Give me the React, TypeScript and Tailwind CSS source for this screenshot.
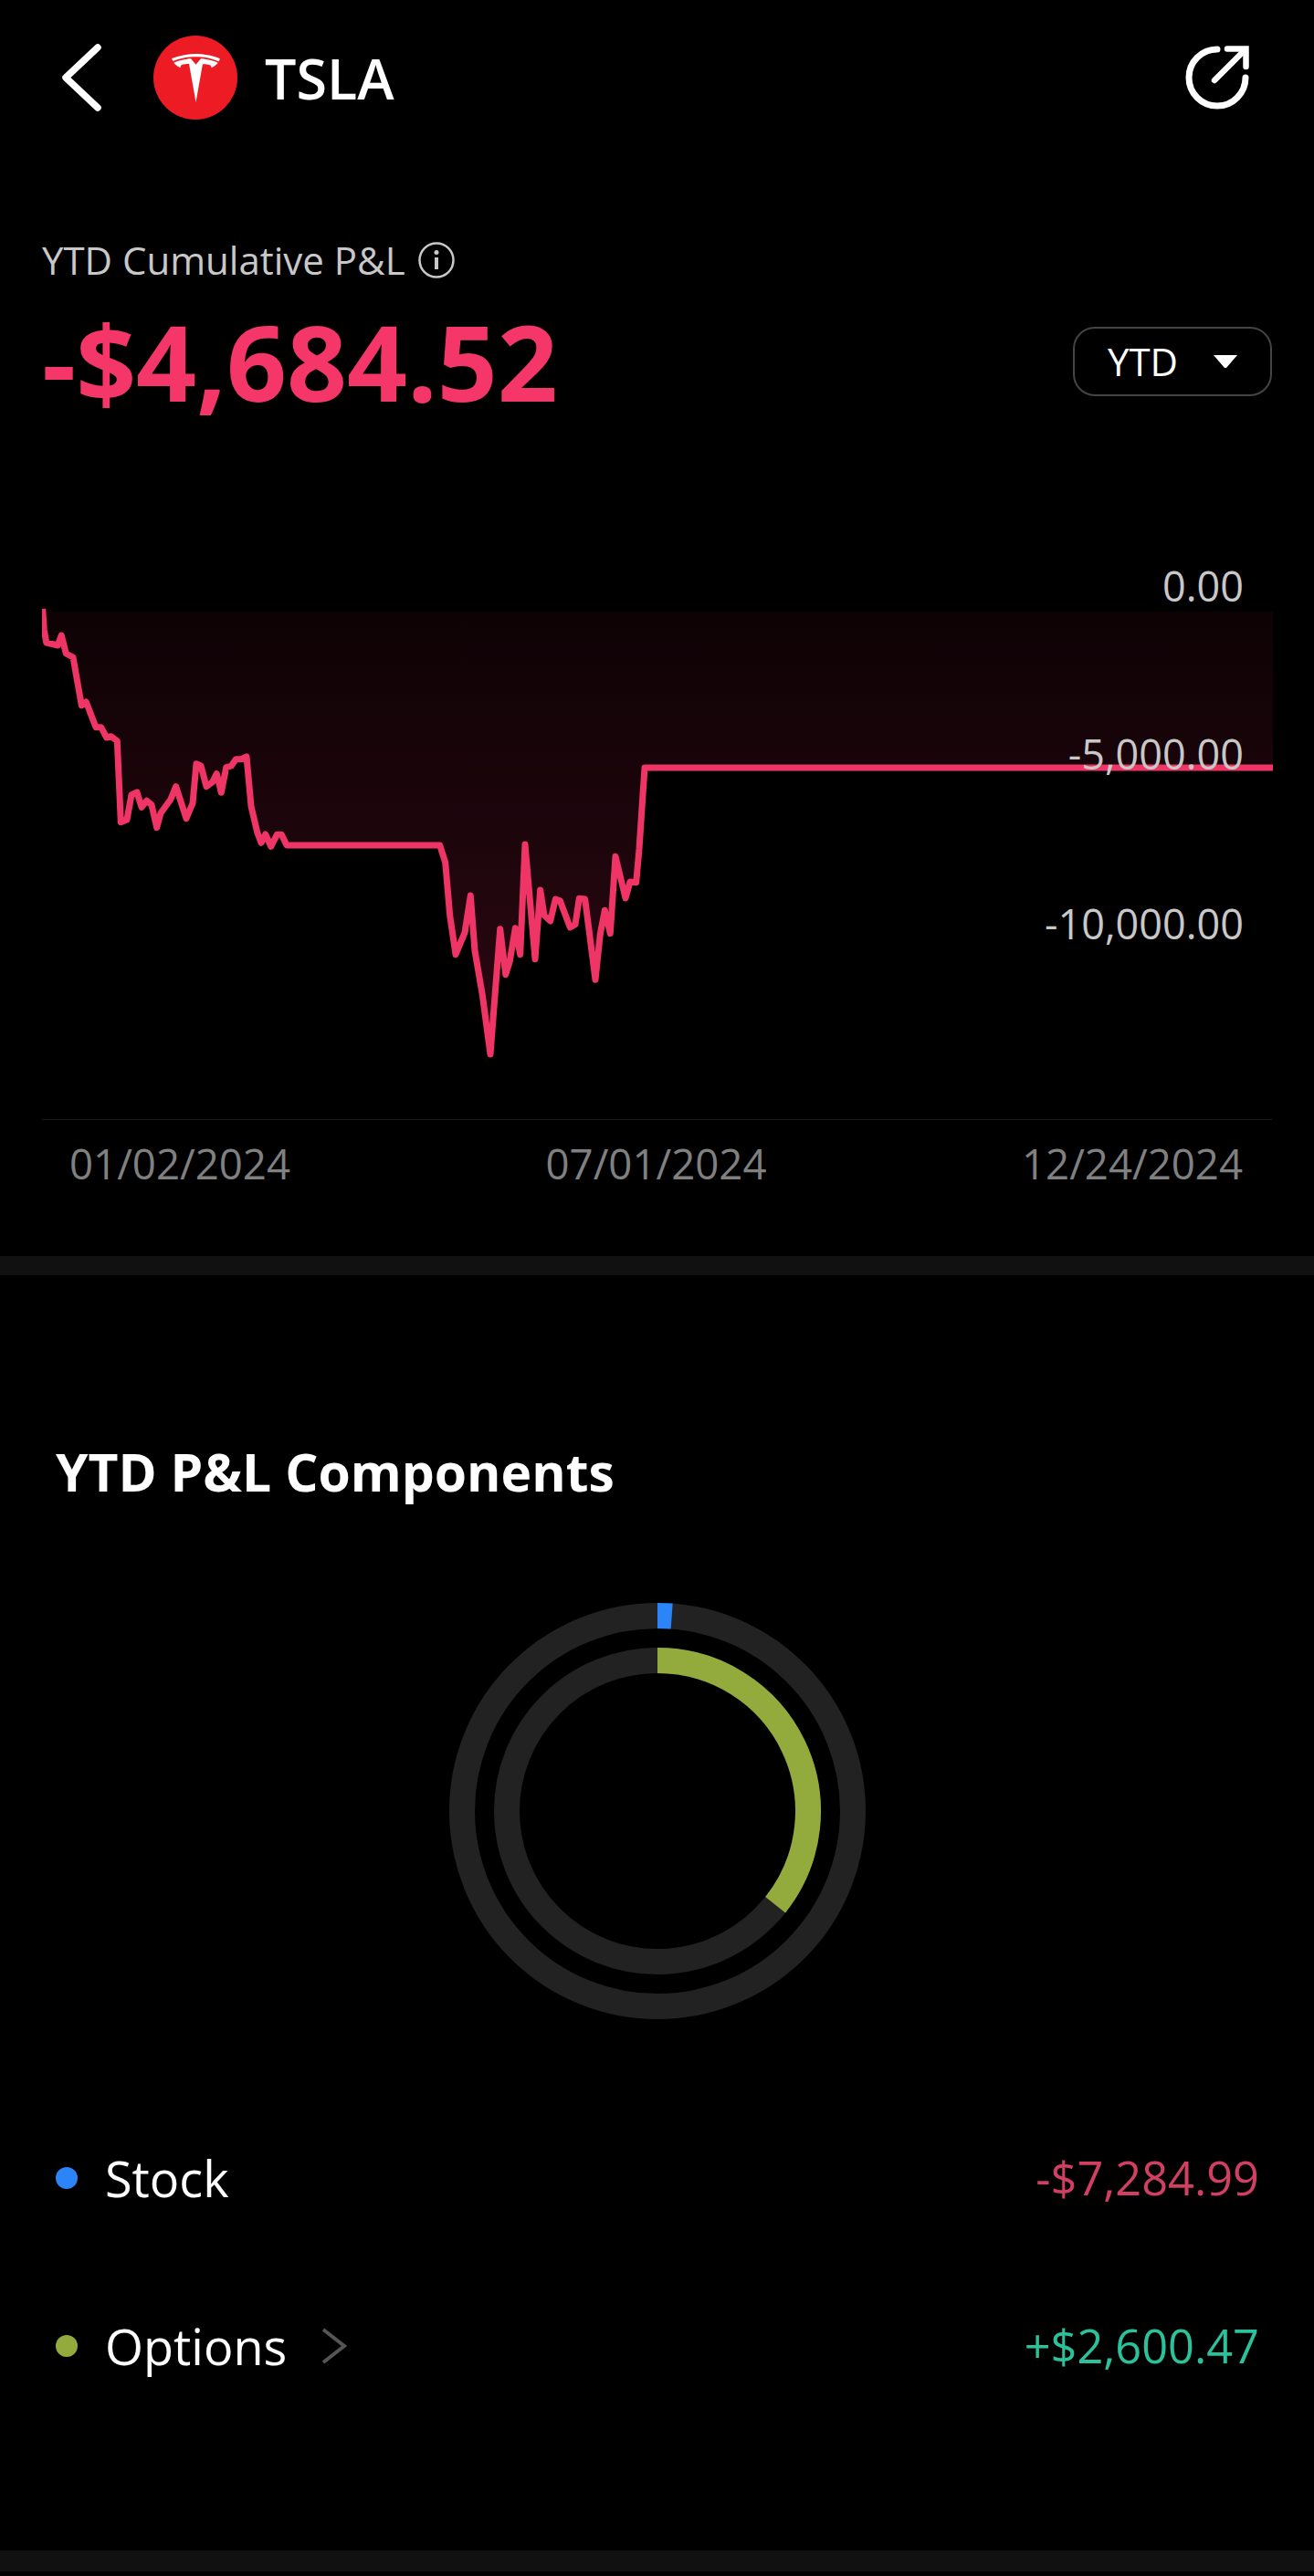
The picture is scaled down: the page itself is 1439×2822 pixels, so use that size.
const linePts = "46.7,667 48.3,690 50.7,704 63.3,707 67.3,696 72.3,716 80,720 89.3,772.7 94.3,769 105,796.7 110.7,796.7 116.7,808 121.7,806.7 128.3,811.7 132.3,900.7 139,898 144,870.7 150,868 155,884.3 160.7,877.3 166,881.7 171.7,906.7 176,890.7 186.7,876 192.7,861.7 204,896.7 211,880 215,836.7 220,839 226,861.7 232.7,856.7 237.3,847.7 242.3,868.3 247.7,840.7 253.3,839 258.3,831.7 264,831.7 270,829 275,883.3 281.7,911.7 286,923.3 290.7,914 296.7,927.3 303.3,914.3 308.3,914.3 314,926 481.7,926 487.7,945 492.7,1003 499,1045.7 509,1021.7 515.3,981 520,1041.7 528.3,1090 537,1155 547.7,1017.7 553.7,1067.7 558.3,1053 564.3,1016.7 569.7,1045.7 575,925 586,1050.7 591.7,975 596,1002.7 602.7,1009 608.3,985 613.3,986.7 624.3,1016 630,1012.7 634.3,984.3 640.7,985 652,1073.3 657.3,1023.3 662.3,997.3 668.3,1022.7 674,938.3 685,984 690,966 696.7,966.7 700,930 703,885 706,841 1394,841";

function Donut() {
  const cx = 228;
  const cy = 228;
  const arc = (r: number, deg: number) => {
    const a = (deg * Math.PI) / 180;
    const x = cx + r * Math.sin(a);
    const y = cy - r * Math.cos(a);
    return `M${cx} ${cy - r}A${r} ${r} 0 ${deg > 180 ? 1 : 0} 1 ${x} ${y}`;
  };
  return (
    <svg width="456" height="456" viewBox="0 0 456 456" fill="none">
      <circle cx={cx} cy={cy} r="214" stroke="#222222" strokeWidth="28" />
      <circle cx={cx} cy={cy} r="165" stroke="#222222" strokeWidth="28" />
      <path d={arc(214, 4.2)} stroke="#2b84f8" strokeWidth="28" />
      <path d={arc(165, 128.5)} stroke="#93aa3d" strokeWidth="28" />
    </svg>
  );
}

export default function App() {
  return (
    <div className="w-[1439px] h-[2822px] bg-black text-white font-['Open_Sans',sans-serif] overflow-hidden">
      {/* Header */}
      <header className="h-[170px] flex items-center pl-[66px] pr-[70px]">
        <svg width="46" height="76" viewBox="0 0 46 76" fill="none" className="shrink-0">
          <path d="M41 5 L6 38 L41 71" stroke="#ffffff" strokeWidth="7.5" strokeLinecap="round" strokeLinejoin="round" />
        </svg>
        <div className="ml-[56px] w-[92px] h-[92px] rounded-full bg-[#ed1c24] flex items-center justify-center shrink-0">
          <svg width="53" height="53" viewBox="0 0 24 24" fill="#ffffff">
            <path d="M12 5.362l2.475-3.026s4.245.09 8.471 2.054c-1.082 1.636-3.231 2.438-3.231 2.438-.146-1.439-1.154-1.79-4.354-1.79L12 24 8.619 5.034c-3.18 0-4.188.354-4.335 1.792 0 0-2.146-.795-3.229-2.43C5.28 2.431 9.525 2.34 9.525 2.34L12 5.362zm0-3.899c3.415-.03 7.326.528 11.328 2.28.535-.968.672-1.395.672-1.395C19.625.612 15.528.015 12 0 8.472.015 4.375.61 0 2.247c0 0 .195.525.672 1.396C4.674 1.89 8.585 1.43 12 1.46z" />
          </svg>
        </div>
        <div className="ml-[30px] text-[61px] leading-none font-semibold">TSLA</div>
        <svg width="72" height="72" viewBox="0 0 72 72" fill="none" className="ml-auto shrink-0">
          <path d="M36 5 A31 31 0 1 0 67 36" stroke="#ffffff" strokeWidth="7" strokeLinecap="round" />
          <path d="M33 39 L65 7" stroke="#ffffff" strokeWidth="6.5" strokeLinecap="round" />
          <path d="M47 4.5 H67.5 V24" stroke="#ffffff" strokeWidth="6.5" strokeLinecap="round" />
        </svg>
      </header>

      {/* Summary */}
      <section className="px-[46px] pt-[88px]">
        <div className="flex items-center text-[42px] leading-[54px] text-[#c8c8c8]">
          <span>YTD Cumulative P&amp;L</span>
          <svg width="40" height="40" viewBox="0 0 40 40" fill="none" className="ml-[14px]">
            <circle cx="20" cy="20" r="18.5" stroke="#c8c8c8" strokeWidth="2.5" />
            <circle cx="20" cy="11.5" r="2.5" fill="#c8c8c8" />
            <path d="M20 17 V30" stroke="#c8c8c8" strokeWidth="4" />
          </svg>
        </div>
        <div className="flex items-center justify-between mt-[19px]">
          <div className="text-[115.4px] leading-[130px] font-bold text-[#f43668]">-$4,684.52</div>
          <div className="w-[218px] h-[76px] rounded-[24px] border-2 border-[#444444] flex items-center pl-[36px]">
            <span className="text-[42px] leading-none">YTD</span>
            <svg width="28" height="16" viewBox="0 0 28 16" className="ml-[38px]">
              <path d="M1 1 H27 L15 15 H13 Z" fill="#ffffff" />
            </svg>
          </div>
        </div>
      </section>

      {/* Chart */}
      <section className="px-[46px] mt-[139px]">
        <div className="relative h-[627px] border-b border-[#1a1a1a]">
          <svg width="1348" height="626" viewBox="46 600 1348 626" fill="none" className="block">
            <defs>
              <linearGradient id="pnlFill" gradientUnits="userSpaceOnUse" x1="0" y1="670" x2="0" y2="1155">
                <stop offset="0" stopColor="#0e0205" />
                <stop offset="1" stopColor="#2c0813" />
              </linearGradient>
            </defs>
            <polygon points={`${linePts} 1394,670 46,670`} fill="url(#pnlFill)" />
            <polyline points={linePts} stroke="#ee3566" strokeWidth="7" strokeLinejoin="round" />
          </svg>
          <span className="absolute right-[31px] top-[11px] text-[45px] leading-[61px] text-[#c8c8c8]">0.00</span>
          <span className="absolute right-[31px] top-[195px] text-[45px] leading-[61px] text-[#c8c8c8]">-5,000.00</span>
          <span className="absolute right-[31px] top-[381px] text-[45px] leading-[61px] text-[#c8c8c8]">-10,000.00</span>
        </div>
        <div className="flex justify-between pl-[30px] pr-[32px] mt-[17px] text-[45.6px] leading-[61px] text-[#808080]">
          <span>01/02/2024</span>
          <span>07/01/2024</span>
          <span>12/24/2024</span>
        </div>
      </section>

      {/* Divider */}
      <div className="h-[21px] bg-[#111111] mt-[71px]" />

      {/* Components */}
      <section className="px-[61px] pt-[178px]">
        <h2 className="text-[57px] leading-[74px] font-bold">YTD P&amp;L Components</h2>
        <div className="flex justify-center mt-[107px]">
          <Donut />
        </div>
        <div className="mt-[137px] flex items-center justify-between h-[74px]">
          <div className="flex items-center">
            <span className="w-[24px] h-[24px] rounded-full bg-[#2b84f8]" />
            <span className="ml-[30px] text-[54px] leading-[74px]">Stock</span>
          </div>
          <span className="text-[50.5px] leading-[66px] -mr-[1px] text-[#d13f62]">-$7,284.99</span>
        </div>
        <div className="mt-[110px] flex items-center justify-between h-[74px]">
          <div className="flex items-center">
            <span className="w-[24px] h-[24px] rounded-full bg-[#93aa3d]" />
            <span className="ml-[30px] text-[54px] leading-[74px]">Options</span>
            <svg width="30" height="40" viewBox="0 0 30 40" fill="none" className="ml-[37px]">
              <path d="M3 2 L26 20 L3 38" stroke="#555555" strokeWidth="4" />
            </svg>
          </div>
          <span className="text-[50.5px] leading-[66px] -mr-[1px] text-[#2bc29b]">+$2,600.47</span>
        </div>
      </section>

      {/* Bottom divider */}
      <div className="h-[23px] bg-[#111111] mt-[187px]" />
    </div>
  );
}
